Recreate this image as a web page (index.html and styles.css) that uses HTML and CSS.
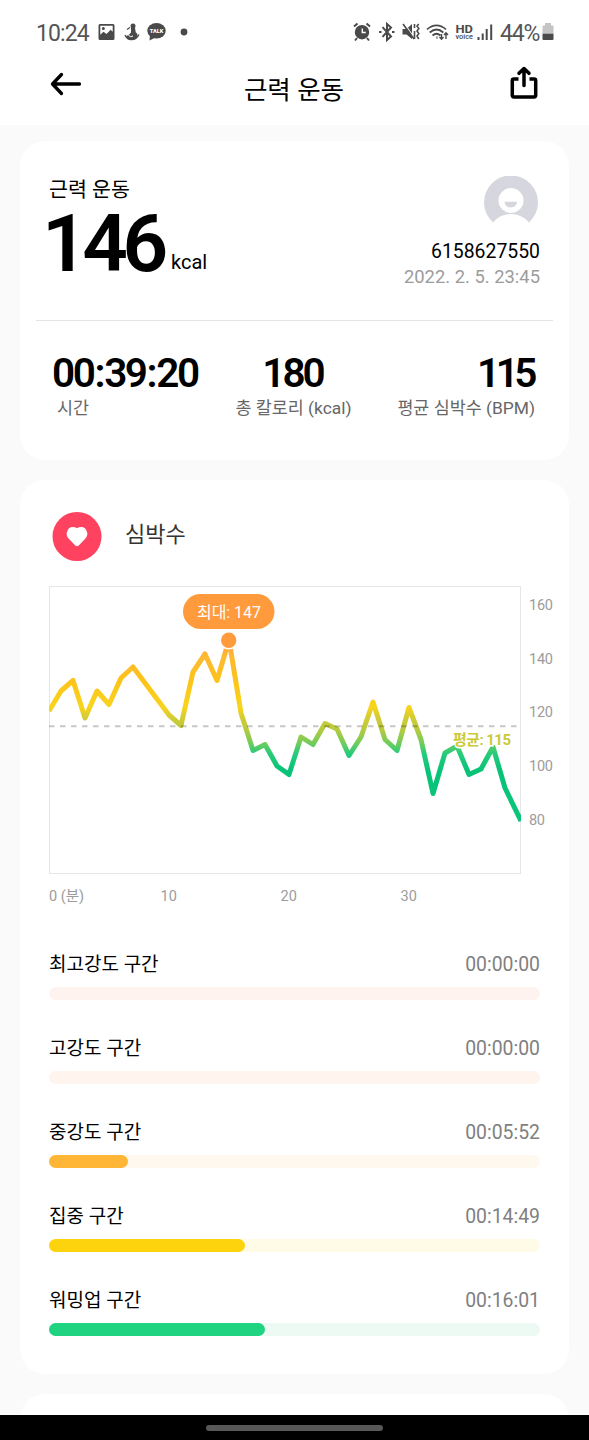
FILE: index.html
```
<!DOCTYPE html>
<html lang="ko">
<head>
    <meta charset="UTF-8">
    <meta name="viewport" content="width=device-width, initial-scale=1.0">
    <title>근력 운동</title>
    <link rel="stylesheet" href="styles.css">
</head>
<body>
    <div class="statusbar">
        <span class="clock">10:24</span>
        <svg class="status-left" width="95" height="22" viewBox="0 0 95 22">
            <path fill="#4a4a4a" fill-rule="evenodd" d="M2 3h13q1.500 0 1.500 1.500v13q0 1.500-1.500 1.500H2q-1.500 0-1.500-1.500v-13Q.5 3 2 3zM2.300 4.800v9l3.200-3 3 2.200 4.200-4.200 2 2V4.800z"/>
            <circle cx="5.300" cy="7.600" r="1.500" fill="#4a4a4a"/>
            <g fill="#4a4a4a">
                <circle cx="35" cy="5" r="2.500"/>
                <path d="M33 7h4l.8 4.500q2.700 1.500 1.200 4.500-1.500 3-5.500 3t-5.500-4q3.500-1 5-3.500z"/>
                <path d="M27 14q2 5 6.500 4.700 5 0 7.500-5.200M29 8.500l3-2" fill="none" stroke="#4a4a4a" stroke-width="1.300"/>
                <path d="M30.500 14.500q2 2 4.500.5" fill="none" stroke="#fff"/>
                <ellipse cx="58.500" cy="9.700" rx="9.200" ry="7.700"/>
                <path d="M52 14l-.5 5.500 6-3z"/>
                <circle cx="86" cy="11" r="3.400"/>
            </g>
            <text class="talk" x="51.800" y="12" textLength="13.500" lengthAdjust="spacingAndGlyphs">TALK</text>
        </svg>
        <svg class="status-right" width="142" height="22" viewBox="0 0 142 22">
            <g fill="none" stroke="#4a4a4a" stroke-width="1.600">
                <circle cx="9" cy="11.200" r="6.400" fill="#4a4a4a"/>
                <path d="M1 5.500L4.500 2.500M17 5.500l-3.500-3M4 17l-2 2.500M14 17l2 2.500" stroke-width="2"/>
                <path d="M9.300 7.500v4h3.500" stroke="#fff" stroke-width="1.400"/>
                <path d="M29.500 6.200l8.500 9.300-4 3.500V3l4 3.500-8.500 9.300" stroke-width="2"/>
                <path d="M26 11h2.500M39 11h2.500" stroke-width="2.200"/>
                <path d="M49.500 8h4l5.500-5v15l-5.500-4.500h-4z" fill="#4a4a4a" stroke="none"/>
                <path d="M51.500 2.500l9.500 14" stroke="#fff" stroke-width="1.200"/>
                <path d="M50 3l11 15" stroke-width="1.600"/>
                <path d="M61.500 3v4M61.500 10v8M65.800 3l-1.800 2 1.800 2.500L64 10l1.800 2.500L64 15l1.800 3"/>
                <path d="M74 8.300q9.500-8 19 0M76.700 11.500q7-6 13.600 0M79.500 14.500q4-3.500 8 0" stroke-width="1.700"/>
                <path d="M83.500 16.500h1" stroke-width="2.500"/>
                <path d="M88.500 13v5M86.500 16l2 2.200 2-2.200M93 18v-6M91 14l2-2.200 2 2.200" stroke-width="1.400"/>
            </g>
            <text class="hd" x="102.500" y="11.500" textLength="17.500" lengthAdjust="spacingAndGlyphs">HD</text>
            <text class="voice" x="102.500" y="18" textLength="17.500" lengthAdjust="spacingAndGlyphs">voice</text>
            <path d="M125.500 19v-3M129.700 19v-6.500M133.700 19V8M138.200 19V3.500" stroke="#4a4a4a" stroke-width="2"/>
        </svg>
        <span class="percent">44%</span>
        <svg class="battery" width="12" height="18" viewBox="0 0 12 18">
            <path fill="#c4c4c4" d="M3 0h6v2.500h1.500q1 0 1 1V10H.5V3.500q0-1 1-1H3z"/>
            <path fill="#4a4a4a" d="M.5 10.500h11V16q0 1-1 1h-9q-1 0-1-1z"/>
        </svg>
    </div>

    <header class="header">
        <svg width="32" height="24" viewBox="0 0 32 24" fill="none" stroke="#000" stroke-width="3.300" stroke-linecap="round" stroke-linejoin="round">
            <path d="M29.500 12H2.500M11.500 2.500L2.500 12l9 9.500"/>
        </svg>
        <h1 class="title">근력 운동</h1>
        <svg class="share" width="28" height="34" viewBox="0 0 28 34" fill="none" stroke="#000" stroke-width="3.500" stroke-linejoin="round">
            <path d="M8.500 13H4q-1.700 0-1.700 1.700v14.600Q2.300 31 4 31h20q1.700 0 1.700-1.700V14.700Q25.700 13 24 13h-4.500"/>
            <path d="M14 19.500V3M9 7.300l5-4.800 5 4.800" stroke-linecap="round"/>
        </svg>
    </header>

    <main class="content">
        <section class="card summary">
            <div class="summary-top">
                <div>
                    <p class="workout">근력 운동</p>
                    <p class="calories"><span class="big">146</span><span class="unit">kcal</span></p>
                </div>
                <div class="user">
                    <svg width="54" height="48" viewBox="0 0 54 48">
                        <path fill="#d6d6df" d="M9 46.500A27 27 0 1 1 45 46.500Q38 38 27 38T9 46.500z"/>
                        <circle cx="27" cy="24.500" r="12.500" fill="#fff"/>
                        <path fill="#d6d6df" d="M20.500 25.800h12.500q-.5 5.700-6.200 5.700t-6.300-5.700z"/>
                    </svg>
                    <p class="user-id">6158627550</p>
                    <p class="date">2022. 2. 5. 23:45</p>
                </div>
            </div>
            <div class="stats">
                <div class="stat stat-time">
                    <p class="value">00<span class="colon">:</span>39<span class="colon">:</span>20</p>
                    <p class="label">시간</p>
                </div>
                <div class="stat stat-total">
                    <p class="value">180</p>
                    <p class="label">총 칼로리 (kcal)</p>
                </div>
                <div class="stat stat-bpm">
                    <p class="value">115</p>
                    <p class="label">평균 심박수 (BPM)</p>
                </div>
            </div>
        </section>

        <section class="card heart">
            <div class="heart-head">
                <svg width="50" height="50" viewBox="0 0 50 50">
                    <circle cx="25" cy="24.500" r="24.500" fill="#ff4260"/>
                    <path fill="#fff" d="M25 34.200q-1 0-2-1l-6.200-6.500q-3.500-4-1.300-8Q17 15 20.500 15q3 0 4.500 1.300 1.500-1.300 4.500-1.300 3.500 0 5 3.700 2.200 4-1.300 8L27 33.200q-1 1-2 1z"/>
                </svg>
                <h2 class="heart-title">심박수</h2>
            </div>

            <svg class="chart" width="549" height="330" viewBox="20 580 549 330">
                <defs>
                    <linearGradient id="rate" gradientUnits="userSpaceOnUse" x1="0" y1="640" x2="0" y2="800">
                        <stop offset="0" stop-color="#ff9b3c"/>
                        <stop offset="0.100" stop-color="#fdb934"/>
                        <stop offset="0.250" stop-color="#fcc31a"/>
                        <stop offset="0.420" stop-color="#f8d41d"/>
                        <stop offset="0.490" stop-color="#d0cb36"/>
                        <stop offset="0.560" stop-color="#b7ca3f"/>
                        <stop offset="0.640" stop-color="#76cc5b"/>
                        <stop offset="0.710" stop-color="#26cc7b"/>
                        <stop offset="0.820" stop-color="#07c277"/>
                        <stop offset="1" stop-color="#0ac47a"/>
                    </linearGradient>
                    <clipPath id="plot"><rect x="49" y="586" width="472" height="288"/></clipPath>
                </defs>
                <rect x="49.500" y="586.500" width="471" height="287" fill="none" stroke="#e6e6e6"/>
                <polyline clip-path="url(#plot)" fill="none" stroke="url(#rate)" stroke-width="5" stroke-linejoin="round" points="49,711 61,691 73,680.500 85,718 97,691 109,704.500 121,678 133,667 145,683 157,699 169,715 181,725.500 193,672 205,654 217,680.500 229,640 241,713 253,750.500 265,744.500 277,766 289,774.500 301,737 313,744.500 325,723.500 337,729 349,755.500 361,737 373,702 385,739.500 397,750.500 409,707.500 421,739.500 433,793.500 445,753 457,746 469,774.500 481,769 493,747 505,788 521,821"/>
                <path d="M49 726.200h472" stroke="#000" stroke-opacity=".22" stroke-width="2" stroke-dasharray="5.500 5.500"/>
                <circle cx="228.700" cy="640.300" r="8.500" fill="#ff9b3c" stroke="#fff" stroke-width="1.600"/>
                <rect x="183" y="594" width="91.500" height="35" rx="17.500" fill="#ff9b3c"/>
                <text class="max" x="197" y="618" textLength="64">최대: 147</text>
                <text class="avg" x="453" y="745" textLength="58">평균: 115</text>
                <g class="axis">
                    <text x="529" y="610" textLength="24">160</text>
                    <text x="529" y="663.500" textLength="24">140</text>
                    <text x="529" y="717" textLength="24">120</text>
                    <text x="529" y="771" textLength="24">100</text>
                    <text x="529" y="824.500" textLength="16">80</text>
                    <text x="49" y="901" textLength="35">0 (분)</text>
                    <text x="160.500" y="901" textLength="16.500">10</text>
                    <text x="280.500" y="901" textLength="16.500">20</text>
                    <text x="400.500" y="901" textLength="16.500">30</text>
                </g>
            </svg>

            <div class="zones">
                <div class="zone max-zone">
                    <div class="zone-text"><span>최고강도 구간</span><span class="time">00:00:00</span></div>
                    <div class="bar"></div>
                </div>
                <div class="zone high-zone">
                    <div class="zone-text"><span>고강도 구간</span><span class="time">00:00:00</span></div>
                    <div class="bar"></div>
                </div>
                <div class="zone mid-zone">
                    <div class="zone-text"><span>중강도 구간</span><span class="time">00:05:52</span></div>
                    <div class="bar"><div class="fill" style="width: 16%"></div></div>
                </div>
                <div class="zone focus-zone">
                    <div class="zone-text"><span>집중 구간</span><span class="time">00:14:49</span></div>
                    <div class="bar"><div class="fill" style="width: 40%"></div></div>
                </div>
                <div class="zone warm-zone">
                    <div class="zone-text"><span>워밍업 구간</span><span class="time">00:16:01</span></div>
                    <div class="bar"><div class="fill" style="width: 44%"></div></div>
                </div>
            </div>
        </section>

        <section class="card next"></section>
    </main>

    <div class="navbar"><div class="handle"></div></div>
</body>
</html>
```
FILE: styles.css
```
* {
    box-sizing: border-box;
    margin: 0;
    padding: 0;
}
body {
    display: flex;
    flex-direction: column;
    height: 1440px;
    overflow: hidden;
    background: #fafafa;
    color: #000;
    font-family: Roboto, "Noto Sans CJK KR", sans-serif;
}
svg {
    display: block;
    flex: none;
}

/* status bar */
.statusbar {
    display: flex;
    align-items: center;
    flex: none;
    height: 64px;
    padding: 0 35px 0 36px;
    background: #fff;
    color: #555;
    font-size: 23px;
    line-height: 24px;
}
.clock {
    width: 62px;
    padding-top: 3px;
    letter-spacing: -0.9px;
}
.status-left {
    margin-right: auto;
}
.status-right {
    margin-right: 5px;
}
.percent {
    width: 42px;
    padding-top: 3px;
    letter-spacing: -1.2px;
}
.talk {
    fill: #fff;
    font-size: 6px;
    font-weight: 900;
}
.hd {
    fill: #4a4a4a;
    font-size: 11px;
    font-weight: 700;
}
.voice {
    fill: #4a4a4a;
    font-size: 7px;
    font-weight: 500;
}

/* header */
.header {
    display: flex;
    justify-content: space-between;
    flex: none;
    height: 61px;
    padding: 8px 51px 0 50px;
    background: #fff;
}
.title {
    padding: 3px 4px 0 0;
    font-size: 25.5px;
    line-height: 30px;
    font-weight: 400;
}
.share {
    margin-top: -6px;
}

/* cards */
.content {
    flex: 1;
    min-height: 0;
    overflow: hidden;
    padding: 16px 20px 0;
}
.card {
    margin-bottom: 20px;
    border-radius: 25px;
    background: #fff;
}
.summary {
    height: 319px;
    padding: 35px 16px 0;
}
.summary-top {
    display: flex;
    justify-content: space-between;
    height: 145px;
    padding: 0 13px 0 6px;
    border-bottom: 1px solid #e4e4e4;
}
.workout {
    padding: 1px 0 0 7px;
    font-size: 20.6px;
    line-height: 27px;
}
.calories {
    display: flex;
    align-items: baseline;
    line-height: 80px;
}
.big {
    width: 129px;
    font-size: 80px;
    font-weight: 600;
    letter-spacing: -5.5px;
}
.unit {
    padding-bottom: 2px;
    font-size: 20px;
    transform: translateY(-2px);
}
.user {
    display: flex;
    flex-direction: column;
    align-items: flex-end;
}
.user svg {
    margin-right: 2px;
}
.user-id {
    padding-top: 14px;
    font-size: 19.4px;
    line-height: 27px;
}
.date {
    color: #9c9c9c;
    font-size: 18.4px;
    line-height: 23px;
}
.stats {
    display: grid;
    grid-template-columns: 1fr auto 1fr;
    padding: 28px 18px 0 16px;
}
.value {
    font-size: 40.5px;
    line-height: 48px;
    font-weight: 600;
    letter-spacing: -2.4px;
}
.colon {
    margin: 0 1px;
}
.label {
    color: #666;
    font-size: 17.4px;
    line-height: 22px;
}
.stat-time .label {
    padding-left: 5px;
}
.stat-total {
    text-align: center;
}
.stat-total .value {
    padding-right: 2px;
    letter-spacing: -3px;
}
.stat-bpm {
    text-align: right;
}
.stat-bpm .value {
    padding-right: 2px;
    letter-spacing: -4.5px;
}

/* heart rate */
.heart {
    height: 894px;
    padding-top: 32px;
}
.heart-head {
    display: flex;
    gap: 23px;
    height: 68px;
    padding-left: 32px;
}
.heart-title {
    padding-top: 8px;
    color: #333;
    font-size: 22px;
    line-height: 30px;
    font-weight: 400;
}
.max {
    fill: #fff;
    font-size: 16px;
}
.avg {
    fill: #cbc935;
    font-size: 15px;
    font-weight: 700;
    paint-order: stroke;
    stroke: #fff;
    stroke-width: 3px;
}
.axis {
    fill: #9c9c9c;
    font-size: 14.5px;
}

/* zones */
.zones {
    padding: 40px 29px 0;
}
.zone {
    height: 84px;
}
.zone-text {
    display: flex;
    justify-content: space-between;
    height: 37px;
    font-size: 19px;
    line-height: 30px;
}
.time {
    color: #808080;
    font-size: 19.4px;
}
.bar {
    height: 13px;
    border-radius: 7px;
}
.fill {
    height: 13px;
    border-radius: 7px;
}
.max-zone .bar {
    background: #fff3f0;
}
.high-zone .bar {
    background: #fff5ee;
}
.mid-zone .bar {
    background: #fff8ee;
}
.mid-zone .fill {
    background: #ffb637;
}
.focus-zone .bar {
    background: #fffbe6;
}
.focus-zone .fill {
    background: #fcd30c;
}
.warm-zone .bar {
    background: #edfaf4;
}
.warm-zone .fill {
    background: #1fd381;
}
.next {
    height: 80px;
}

/* system navigation */
.navbar {
    display: flex;
    justify-content: center;
    flex: none;
    height: 25px;
    padding-top: 10px;
    background: #000;
}
.handle {
    width: 177px;
    height: 6px;
    border-radius: 3px;
    background: #585858;
}
```
